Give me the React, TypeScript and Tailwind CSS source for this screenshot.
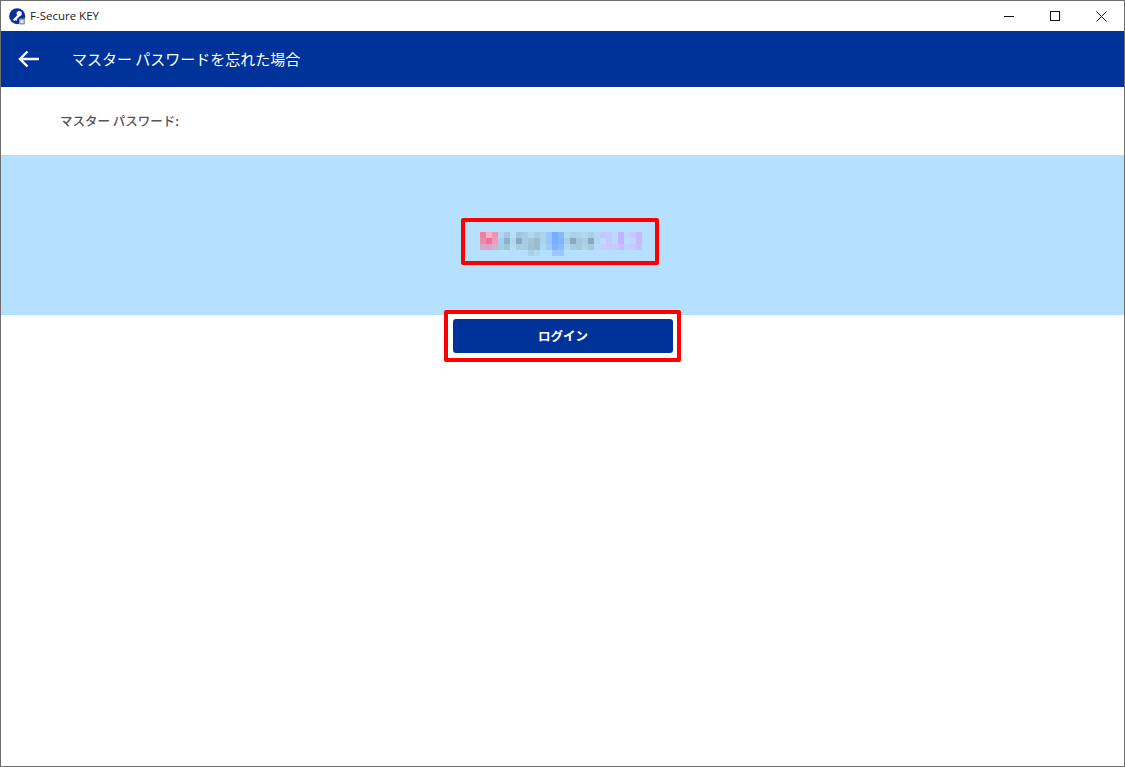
const jp = "font-['Noto_Sans_CJK_JP','Noto_Sans',sans-serif]";

const bg = "#b5e0ff";

const mosaic: string[][] = [
  ["#f47c9c", "#f4b4c8", "#f490b4", "#b0d8f0", "#a4c8de", bg, "#a4c4dc", "#a8cce4", "#b0d8f0", "#a8cce0", "#acd6ee", "#9cc4ff", "#78acff", "#88b8ff", "#b0daf4", "#a8d0e8", "#acd4ea", "#b0d8f0", "#a8d0e6", "#b0daf6", "#c8c4ff", "#c8c8ff", "#b8dcff", "#c4b4ff", "#bcd8ff", "#c8c8ff", "#c4b8ff"],
  ["#ec8cac", "#f070a0", "#f09cb8", "#a8d0ec", "#90b0c4", "#b0d8f0", "#8aa8bc", "#a8cce4", "#a0c4d8", "#9cbcd0", "#a8d4ec", "#9cc4ff", "#78aeff", "#80b4ff", "#a8d0e4", "#8ca8ba", "#a6c8dc", "#a8d0e8", "#8ca8bc", "#b0d8f4", "#bcdcff", "#c8c8ff", "#b8dcff", "#c4b4ff", "#b8dcff", "#bcd8ff", "#c4b8ff"],
  ["#d8a8cc", "#e0a0c8", "#d4b0cc", "#a8cce2", "#a0c4d8", "#b2dcf8", "#a8cce0", "#a8cce0", "#a0c0d4", "#9cbcd0", "#b0d8f4", "#a0c8ff", "#80b4ff", "#8cbcff", "#b0d8f0", "#a8cce0", "#a4c8dc", "#acd4ea", "#a4c8dc", "#b4dcfa", "#c8ccff", "#c8c8ff", "#c8c8ff", "#c4c0ff", "#c0d0ff", "#c8c8ff", "#c4c0ff"],
  [bg, bg, bg, bg, bg, bg, bg, bg, "#a8d0e8", "#b0d8f0", bg, bg, "#98c8ff", "#98c8ff", bg, bg, bg, bg, bg, bg, bg, bg, bg, bg, bg, bg, bg],
];

const Logo = () => (
  <svg width="17" height="17" viewBox="0 0 17 17" className="shrink-0">
    <circle cx="8.2" cy="8.2" r="8" fill="#0b2f9f" />
    <circle cx="10.2" cy="5.6" r="2.6" fill="#fff" />
    <path d="M9 6.5 3.8 11.7l1.4 1.4 1-1 1 1 1-1-.6-.9L11 8z" fill="#fff" />
    <rect x="10" y="10.5" width="6" height="6" rx="1" fill="#9a9a9a" />
    <rect x="11.5" y="12" width="3" height="3" fill="#e8e8e8" />
  </svg>
);

const WindowControls = () => (
  <div className="flex h-full">
    <div className="flex h-full w-[46px] items-center justify-center">
      <svg width="10" height="10" viewBox="0 0 10 10">
        <path d="M0 5.5h10" stroke="#111" strokeWidth="1" />
      </svg>
    </div>
    <div className="flex h-full w-[46px] items-center justify-center">
      <svg width="10" height="10" viewBox="0 0 10 10">
        <rect x="0.5" y="0.5" width="9" height="9" fill="none" stroke="#111" strokeWidth="1" />
      </svg>
    </div>
    <div className="flex h-full w-[46px] items-center justify-center">
      <svg width="11" height="11" viewBox="0 0 11 11">
        <path d="M.5.5l10 10M10.5.5l-10 10" stroke="#111" strokeWidth="1" />
      </svg>
    </div>
  </div>
);

export default function App() {
  return (
    <div className={`flex h-[767px] w-[1125px] flex-col overflow-hidden border border-[#6e6e6e] bg-white ${jp}`}>
      <div className="flex h-[30px] shrink-0 items-center justify-between bg-white">
        <div className="flex items-center gap-[4px] pl-[8px]">
          <Logo />
          <span className="font-['Open_Sans',sans-serif] text-[11.5px] text-[#222]">F-Secure KEY</span>
        </div>
        <WindowControls />
      </div>

      <div className="flex h-[56px] shrink-0 items-center bg-[#003399] pl-[17px] text-white">
        <svg width="22" height="18" viewBox="0 0 22 18" fill="none">
          <path d="M21 9H2M9.5 1.5 2 9l7.5 7.5" stroke="#fff" strokeWidth="2.4" />
        </svg>
        <h1 className="ml-[32px] text-[15px] font-normal">マスター パスワードを忘れた場合</h1>
      </div>

      <div className="flex h-[68px] shrink-0 items-center pl-[59px]">
        <span className="text-[12.5px] font-medium text-[#555]">マスター パスワード:</span>
      </div>

      <div className="flex h-[160px] shrink-0 items-start justify-center bg-[#b5e0ff] pt-[63px] pr-[6px]">
        <div className="h-[47px] w-[198px] rounded-[2px] border-4 border-[#ff0000] pt-[10px] pl-[15px]">
          <div className="grid grid-cols-[repeat(27,6px)] grid-rows-[repeat(4,6px)]">
            {mosaic.flat().map((color, i) => (
              <div key={i} style={{ backgroundColor: color }} />
            ))}
          </div>
        </div>
      </div>

      <div className="-mt-[5px] flex justify-center">
        <div className="relative rounded-[2px] border-4 border-[#ff0000] bg-white py-[5px] pr-[4px] pl-[5px]">
          <button className="flex h-[34px] w-[220px] items-center justify-center rounded-[3px] bg-[#003399] text-[12.5px] font-bold text-white">
            ログイン
          </button>
        </div>
      </div>
    </div>
  );
}
